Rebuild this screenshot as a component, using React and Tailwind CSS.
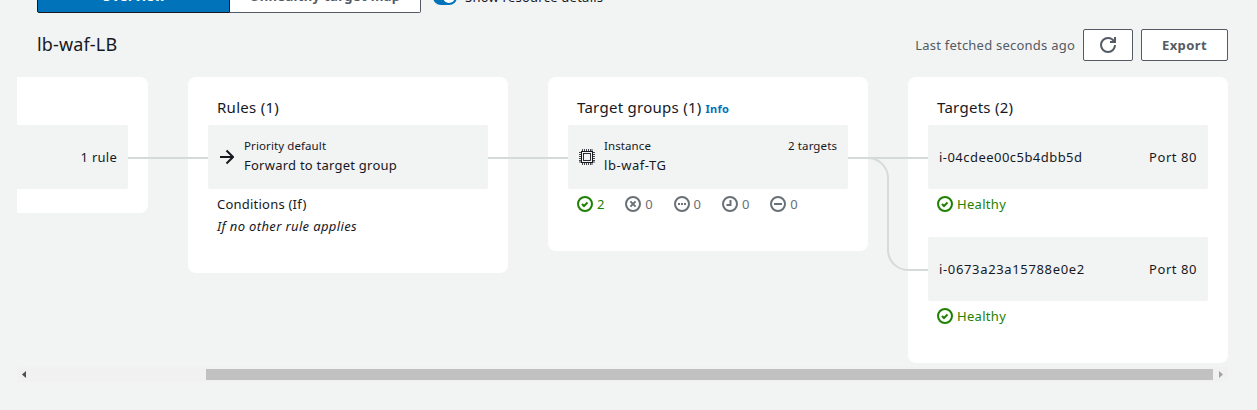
import React from "react";

function StatusIcon({ type }) {
  const marks = {
    healthy: <path d="m5 8 2 2 3.52-3.52" />,
    unhealthy: <path d="m5.4 5.4 5.2 5.2M10.6 5.4l-5.2 5.2" />,
    unused: <path d="M4 8h2M7 8h2M10 8h2" />,
    initial: <path d="M8.5 4v5H4.5" />,
    draining: <path d="M4 8h8" />,
  };
  return (
    <svg className="block h-4 w-4 shrink-0" viewBox="0 0 16 16" fill="none" stroke="currentColor" strokeWidth="2">
      <circle cx="8" cy="8" r="7" />
      {marks[type]}
    </svg>
  );
}

function ChipIcon() {
  const pins = [3.5, 5.5, 7.5, 9.5, 11.5, 13];
  return (
    <svg className="block h-4 w-4" viewBox="0 0 16 16" fill="none" stroke="#16191f">
      <rect x="2.5" y="2.5" width="11" height="11" />
      <rect x="4.5" y="4.5" width="7" height="7" strokeWidth="0.9" />
      {pins.map((p) => (
        <path key={p} d={`M${p} 0V2M${p} 14V16M0 ${p}H2M14 ${p}H16`} strokeWidth="0.8" />
      ))}
    </svg>
  );
}

function Card({ className, children }) {
  return <section className={`shrink-0 rounded-lg bg-white px-5 ${className}`}>{children}</section>;
}

function Heading({ children }) {
  return (
    <h3 className="flex h-12 items-baseline pl-[9px] pt-[19px] text-[15px] leading-[22px] tracking-[0.27px]">{children}</h3>
  );
}

function Target({ id, tracking }) {
  return (
    <div className="h-28">
      <div className="flex h-16 items-center justify-between rounded-xs bg-[#f2f3f3] px-[11px] text-[13px] leading-5">
        <span className={tracking}>{id}</span>
        <span className="tracking-[0.55px]">Port 80</span>
      </div>
      <div className="flex items-center gap-1 pl-[9px] pt-1 text-[13px] leading-[22px] text-[#1d8102]">
        <StatusIcon type="healthy" />
        <span className="tracking-[0.3px]">Healthy</span>
      </div>
    </div>
  );
}

const counts = [
  ["healthy", 2],
  ["unhealthy", 0],
  ["unused", 0],
  ["initial", 0],
  ["draining", 0],
];

export default function App() {
  return (
    <main className="flex h-[410px] w-[1257px] flex-col overflow-hidden whitespace-nowrap bg-[#f2f3f3] font-['Noto_Sans',sans-serif] text-[#16191f]">
      <div className="flex h-[13px] shrink-0 items-end overflow-hidden pl-[37px]">
        <div className="flex h-8 w-[193px] shrink-0 items-center justify-center rounded-l-xs border border-[#16191f] bg-[#0073bb] text-[13px] font-bold tracking-[0.4px] text-white">
          Overview
        </div>
        <div className="flex h-8 w-[191px] shrink-0 items-center justify-center rounded-r-xs border border-l-0 border-[#545b64] bg-white text-[13px] font-bold tracking-[0.35px] text-[#545b64]">
          Unhealthy target map
        </div>
        <div className="mb-2 ml-3 flex h-4 w-6 shrink-0 items-center justify-end rounded-full bg-[#0073bb] pr-0.5">
          <div className="h-3 w-3 rounded-full bg-white" />
        </div>
        <span className="mb-[5px] ml-2 text-[13px] leading-[22px] tracking-[0.24px]">Show resource details</span>
      </div>

      <header className="flex h-16 shrink-0 items-center justify-between pl-[37px] pr-[29px]">
        <h2 className="-mt-0.5 text-[18px] leading-6 tracking-[0.15px]">lb-waf-LB</h2>
        <div className="flex items-center">
          <span className="mr-2 pt-px text-[13px] tracking-[0.23px] text-[#545b64]">Last fetched seconds ago</span>
          <button className="mr-2 flex h-8 w-[50px] items-center justify-center rounded-xs border border-[#545b64] bg-white text-[#545b64]" aria-label="Refresh">
            <svg className="block h-4 w-4" viewBox="0 0 16 16" fill="none" stroke="currentColor" strokeWidth="2">
              <path d="M15 8c0 3.87-3.13 7-7 7s-7-3.13-7-7 3.13-7 7-7c2.79 0 5.2 1.63 6.33 4" />
              <path d="M10 5h5V0" />
            </svg>
          </button>
          <button className="h-8 w-[87px] rounded-xs border border-[#545b64] bg-white pt-px text-[13px] font-bold tracking-[0.4px] text-[#545b64]">
            Export
          </button>
        </div>
      </header>

      <div className="relative ml-[17px] flex h-[290px] w-[1211px] shrink-0 items-start gap-10">
        <section className="h-[136px] w-[131px] shrink-0 rounded-r-lg bg-white pr-5 pt-12">
          <div className="flex h-16 items-center justify-end rounded-r-xs bg-[#f2f3f3] pr-[11px] text-[13px] leading-5 tracking-[0.25px]">
            1 rule
          </div>
        </section>

        <Card className="h-[196px] w-80">
          <Heading>Rules (1)</Heading>
          <div className="flex h-16 items-center rounded-xs bg-[#f2f3f3] pl-3">
            <svg className="mr-[10px] block h-4 w-[14px]" viewBox="0 0 14 16" fill="none" stroke="#16191f" strokeWidth="2">
              <path d="M0 8h13M6.5 1.5 13 8l-6.5 6.5" />
            </svg>
            <div className="-mt-0.5">
              <div className="text-[11.5px] leading-[18px] tracking-[0.1px]">Priority default</div>
              <div className="text-[13px] leading-5 tracking-[0.24px]">Forward to target group</div>
            </div>
          </div>
          <div className="pl-[9px] pt-1 text-[13px] leading-[22px]">
            <div className="tracking-[0.22px]">Conditions (If)</div>
            <div className="italic tracking-[0.36px]">If no other rule applies</div>
          </div>
        </Card>

        <Card className="h-[174px] w-80">
          <Heading>
            Target groups (1)
            <span className="ml-1 text-[11px] font-bold text-[#0073bb]">Info</span>
          </Heading>
          <div className="flex h-16 items-center rounded-xs bg-[#f2f3f3] pl-[11px] pr-[11px]">
            <ChipIcon />
            <div className="-mt-0.5 ml-[9px] grow">
              <div className="flex justify-between text-[11.5px] leading-[18px] tracking-[0.1px]">
                <span>Instance</span>
                <span>2 targets</span>
              </div>
              <div className="text-[13px] leading-5 tracking-[0.55px]">lb-waf-TG</div>
            </div>
          </div>
          <div className="flex pl-[9px] pt-1 text-[13px] leading-[22px] text-[#687078]">
            {counts.map(([type, n]) => (
              <div
                key={type}
                className={`flex w-[48.3px] items-center gap-1 ${type === "healthy" ? "text-[#1d8102]" : ""}`}
              >
                <StatusIcon type={type} />
                <span>{n}</span>
              </div>
            ))}
          </div>
        </Card>

        <Card className="h-[286px] w-80">
          <Heading>Targets (2)</Heading>
          <Target id="i-04cdee00c5b4dbb5d" tracking="tracking-[0.46px]" />
          <Target id="i-0673a23a15788e0e2" tracking="tracking-[0.65px]" />
        </Card>

        <svg className="pointer-events-none absolute inset-0" width="1211" height="290" fill="none" stroke="#d5dbdb" strokeWidth="2">
          <path d="M111 81H191M471 81H551M831 81H911" />
          <path d="M831 81H851A20 20 0 0 1 871 101V173A20 20 0 0 0 891 193H911" />
        </svg>
      </div>

      <div className="ml-[17px] flex h-[15px] w-[1211px] shrink-0 items-center bg-[#f1f1f1] pl-[5px]">
        <svg className="block h-[7px] w-1" viewBox="0 0 4 7" fill="#505050">
          <path d="M4 0v7L0 3.5z" />
        </svg>
        <div className="ml-[180px] h-[11px] w-[1007px] bg-[#c1c1c1]" />
        <svg className="ml-1.5 block h-[7px] w-1" viewBox="0 0 4 7" fill="#a3a3a3">
          <path d="M0 0v7l4-3.5z" />
        </svg>
      </div>
    </main>
  );
}
